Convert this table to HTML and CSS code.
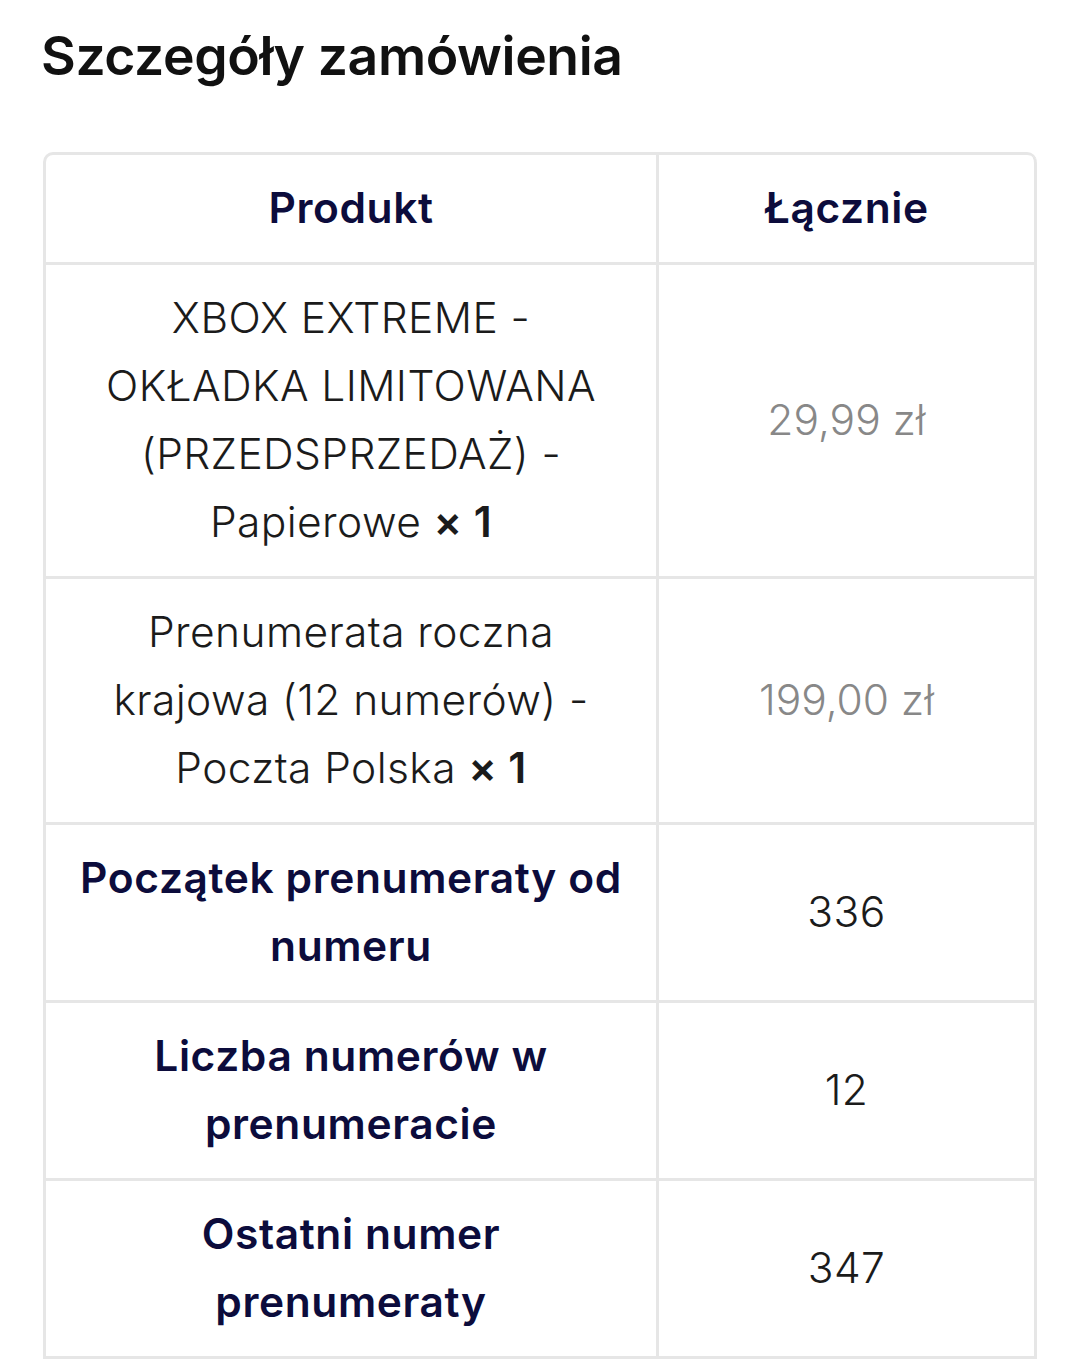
FILE: index.html
```html
<!DOCTYPE html>
<html lang="pl">
<head>
<meta charset="utf-8">
<title>Szczegóły zamówienia</title>
<link rel="stylesheet" href="styles.css">
</head>
<body>
<section class="order">
  <h2 class="order-title">Szczegóły zamówienia</h2>
  <table class="order-table">
    <colgroup>
      <col class="col-product">
      <col class="col-total">
    </colgroup>
    <thead>
      <tr>
        <th class="cell head">Produkt</th>
        <th class="cell head">Łącznie</th>
      </tr>
    </thead>
    <tbody>
      <tr>
        <td class="cell">XBOX EXTREME -<br>OKŁADKA LIMITOWANA<br>(PRZEDSPRZEDAŻ) -<br>Papierowe <strong class="qty">×&nbsp;1</strong></td>
        <td class="cell price">29,99&nbsp;zł</td>
      </tr>
      <tr>
        <td class="cell">Prenumerata roczna<br>krajowa (12 numerów) -<br>Poczta Polska <strong class="qty">×&nbsp;1</strong></td>
        <td class="cell price">199,00&nbsp;zł</td>
      </tr>
      <tr>
        <th class="cell label">Początek prenumeraty od<br>numeru</th>
        <td class="cell">336</td>
      </tr>
      <tr>
        <th class="cell label">Liczba numerów w<br>prenumeracie</th>
        <td class="cell">12</td>
      </tr>
      <tr>
        <th class="cell label">Ostatni numer<br>prenumeraty</th>
        <td class="cell">347</td>
      </tr>
    </tbody>
  </table>
</section>
</body>
</html>
```

FILE: styles.css
```css
html, body {
  margin: 0;
  padding: 0;
  background: #ffffff;
}

body {
  font-family: Inter, "Noto Sans", "DejaVu Sans", sans-serif;
  color: #1b1b1b;
}

.order {
  padding: 0 43px;
}

.order-title {
  margin: 0 0 0 -2px;
  padding-top: 22px;
  height: 152px;
  box-sizing: border-box;
  font-size: 53.5px;
  line-height: 68px;
  font-weight: 600;
  color: #111111;
  letter-spacing: -0.4px;
}

.order-table {
  width: 994px;
  table-layout: fixed;
  border-collapse: separate;
  border-spacing: 0;
  border-left: 3px solid #e6e6e6;
  border-top: 3px solid #e6e6e6;
  border-radius: 10px 10px 0 0;
}

.col-product {
  width: 613px;
}

.col-total {
  width: 378px;
}

.cell {
  padding: 19px 12px 20px;
  border-right: 3px solid #e6e6e6;
  border-bottom: 3px solid #e6e6e6;
  font-size: 42.5px;
  line-height: 68px;
  font-weight: 300;
  letter-spacing: 0.4px;
  text-align: center;
  vertical-align: middle;
}

.head:first-child {
  border-top-left-radius: 8px;
}

.head:last-child {
  border-top-right-radius: 8px;
}

.head,
.label {
  font-weight: 600;
  letter-spacing: 0.6px;
  color: #0c0c3c;
}

.qty {
  font-weight: 600;
}

.price {
  color: #888888;
  letter-spacing: 0;
}
```
